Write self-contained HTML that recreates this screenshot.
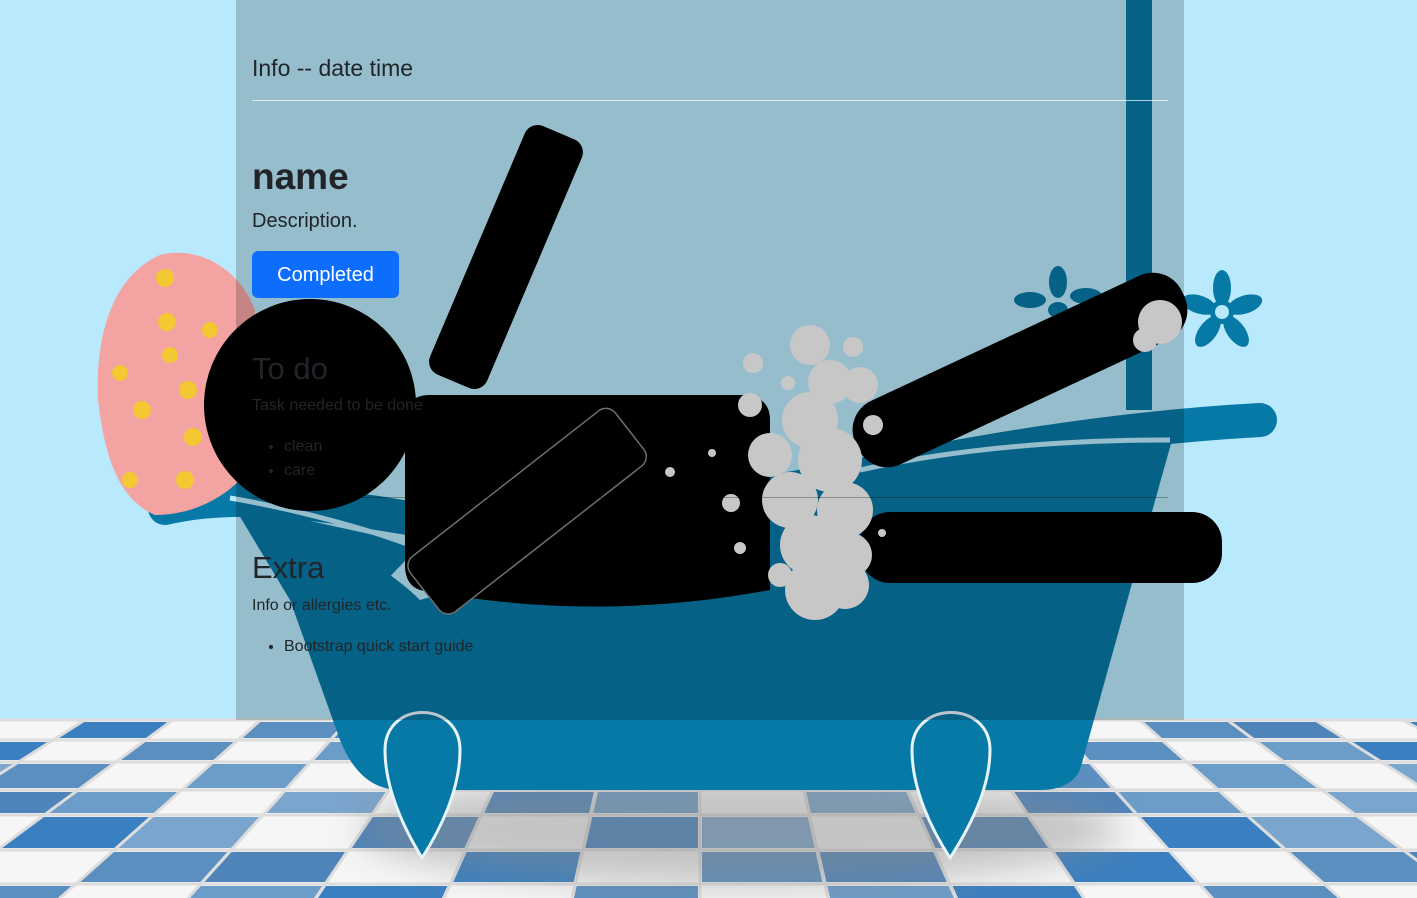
<!DOCTYPE html>
<html><head><meta charset="utf-8"><style>
html,body{margin:0;padding:0;width:1417px;height:898px;overflow:hidden;background:#b9e9fc;font-family:"Liberation Sans",sans-serif}
#bg{position:absolute;left:0;top:0}
.t{position:absolute;left:252px;color:#212529;margin:0;white-space:nowrap}
hr{position:absolute;margin:0;border:0;border-top:1px solid rgba(255,255,255,.7);height:0}
ul{position:absolute;left:252px;margin:0;padding-left:32px;font-size:16px;color:#212529;line-height:24px}
</style></head><body>
<svg id="bg" width="1417" height="898" viewBox="0 0 1417 898">
<defs>
<filter id="bl" x="-20%" y="-50%" width="140%" height="200%"><feGaussianBlur stdDeviation="18"/></filter>
</defs>
<rect width="1417" height="898" fill="#b9e9fc"/>
<g id="floor"></g>
<ellipse cx="740" cy="830" rx="380" ry="55" fill="#888" opacity=".45" filter="url(#bl)"/>
<rect x="1126" y="0" width="26" height="410" fill="#0779a6"/>
<g fill="#0779a6" transform="translate(1058,300)">
<ellipse cx="0" cy="-18" rx="9" ry="16"/><ellipse cx="-28" cy="0" rx="16" ry="8"/><ellipse cx="28" cy="-4" rx="16" ry="8"/><ellipse cx="0" cy="10" rx="10" ry="8"/></g>
<g transform="translate(1222,312)" fill="#0779a6">
<ellipse cx="0" cy="-24" rx="9" ry="18"/><ellipse cx="0" cy="-24" rx="9" ry="18" transform="rotate(72)"/><ellipse cx="0" cy="-24" rx="9" ry="18" transform="rotate(144)"/><ellipse cx="0" cy="-24" rx="9" ry="18" transform="rotate(216)"/><ellipse cx="0" cy="-24" rx="9" ry="18" transform="rotate(288)"/>
<circle r="12"/><circle r="7" fill="#b9e9fc"/></g>
<path d="M230 500 C300 520 380 560 420 600 L560 560 C800 470 1000 440 1172 440 L1080 770 Q1070 790 1040 790 L400 790 Q360 790 340 740 L290 600 Z" fill="#0779a6"/>
<path d="M330 640 C300 600 280 540 260 510 L420 545 Z" fill="#0779a6"/>
<path d="M165 508 C240 490 330 505 420 520 C700 540 900 440 1260 420" stroke="#0779a6" stroke-width="34" fill="none" stroke-linecap="round"/>
<path d="M230 498 C300 510 370 530 410 545 M860 470 C950 450 1050 440 1170 440" stroke="#b9e9fc" stroke-width="5" fill="none"/>
<path d="M385 750 C385 700 460 700 460 750 C460 790 440 830 422 858 C405 830 385 790 385 750Z" fill="#0779a6" stroke="#e6f4fa" stroke-width="3"/>
<path d="M912 750 C912 700 990 700 990 750 C990 790 968 830 950 858 C932 830 912 790 912 750Z" fill="#0779a6" stroke="#e6f4fa" stroke-width="3"/>
<path d="M160 255 C200 245 240 270 255 310 C250 350 245 420 240 480 C220 500 190 515 155 515 C120 500 105 460 98 400 C95 330 115 275 160 255Z" fill="#f4a3a3"/>
<g fill="#f3c832"><circle cx="165" cy="278" r="9"/><circle cx="167" cy="322" r="9"/><circle cx="210" cy="330" r="8"/><circle cx="170" cy="355" r="8"/><circle cx="120" cy="373" r="8"/><circle cx="188" cy="390" r="9"/><circle cx="142" cy="410" r="9"/><circle cx="193" cy="437" r="9"/><circle cx="240" cy="425" r="7"/><circle cx="185" cy="480" r="9"/><circle cx="130" cy="480" r="8"/><circle cx="242" cy="345" r="7"/></g>
<circle cx="310" cy="405" r="106" fill="#000"/>
<rect x="475" y="122" width="62" height="270" rx="14" fill="#000" transform="rotate(23 506 257)"/>
<path d="M430 395 L740 395 Q770 395 770 420 L770 590 C650 612 540 612 420 590 Q405 585 405 565 L405 420 Q405 395 430 395Z" fill="#000"/>
<rect x="500" y="385" width="70" height="260" rx="12" fill="#000" stroke="#888" stroke-width="1.5" transform="rotate(52 535 505)"/>
<rect x="840" y="335" width="360" height="70" rx="32" fill="#000" transform="rotate(-25 1020 370)"/>
<rect x="860" y="512" width="362" height="71" rx="30" fill="#000"/>
<g fill="#f6f6f6">
<circle cx="810" cy="345" r="20"/><circle cx="853" cy="347" r="10"/><circle cx="830" cy="382" r="22"/><circle cx="860" cy="385" r="18"/><circle cx="753" cy="363" r="10"/><circle cx="788" cy="383" r="7"/>
<circle cx="810" cy="420" r="28"/><circle cx="770" cy="455" r="22"/><circle cx="830" cy="460" r="32"/><circle cx="790" cy="500" r="28"/><circle cx="845" cy="510" r="28"/><circle cx="810" cy="545" r="30"/><circle cx="850" cy="555" r="22"/><circle cx="815" cy="590" r="30"/><circle cx="845" cy="585" r="24"/><circle cx="780" cy="575" r="12"/><circle cx="750" cy="405" r="12"/>
<circle cx="873" cy="425" r="10"/><circle cx="731" cy="503" r="9"/><circle cx="740" cy="548" r="6"/><circle cx="712" cy="453" r="4"/><circle cx="670" cy="472" r="5"/><circle cx="882" cy="533" r="4"/><circle cx="1160" cy="322" r="22"/><circle cx="1145" cy="340" r="12"/></g>
<rect x="236" y="0" width="948" height="720" fill="#000" opacity=".19"/>
</svg>
<script>
(function(){
var g=document.getElementById('floor'),s='';
s+='<rect x="0" y="720" width="1417" height="178" fill="#f6f6f6"/>';
var ys=[720,740,762,790,815,850,884,920];
var cols=['#5b8fc0','#4e84ba','#6c9cc8','#3a7fc0','#7aa5cc'];
function X(i,y){return 700+i*128*(y-330)/568;}
for(var r=0;r<ys.length-1;r++){for(var i=-9;i<9;i++){
var h=((i*7+r*13)%5+5)%5; if(h>2) continue;
var y1=ys[r]+2,y2=ys[r+1]-2;
var p=[X(i,y1)+2,y1,X(i+1,y1)-2,y1,X(i+1,y2)-2,y2,X(i,y2)+2,y2];
s+='<polygon points="'+p.join(',')+'" fill="'+cols[(i+r+20)%5]+'"/>';}}
for(var i=-9;i<10;i++){s+='<line x1="'+X(i,720)+'" y1="720" x2="'+X(i,898)+'" y2="898" stroke="#ddd" stroke-width="3"/>';}
for(var r=0;r<ys.length;r++){s+='<line x1="0" y1="'+ys[r]+'" x2="1417" y2="'+ys[r]+'" stroke="#ddd" stroke-width="3"/>';}
g.innerHTML=s;})();
</script>
<div class="t" style="top:55px;font-size:23px;font-weight:300">Info -- date time</div>
<hr style="left:252px;top:100px;width:916px">
<div class="t" style="top:156px;font-size:37px;font-weight:bold">name</div>
<div class="t" style="top:210px;font-size:20px">Description.</div>
<div style="position:absolute;left:252px;top:251px;width:147px;height:47px;background:#0d6efd;border-radius:6px;color:#fff;font-size:20px;line-height:49px;text-align:center">Completed</div>
<div class="t" style="top:351px;font-size:31px">To do</div>
<div class="t" style="top:397px;font-size:16px">Task needed to be done</div>
<ul style="top:435px"><li>clean</li><li>care</li></ul>
<hr style="left:252px;top:497px;width:916px;border-top-color:rgba(0,0,0,.3)">
<div class="t" style="top:550px;font-size:31px">Extra</div>
<div class="t" style="top:597px;font-size:16px">Info or allergies etc.</div>
<ul style="top:635px"><li>Bootstrap quick start guide</li></ul>
</body></html>
